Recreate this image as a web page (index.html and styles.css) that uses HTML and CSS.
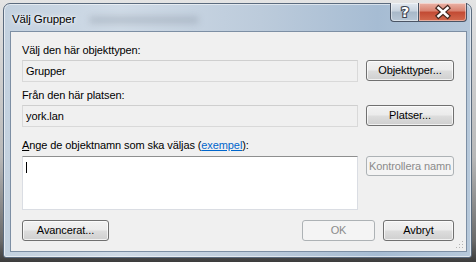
FILE: index.html
```html
<!DOCTYPE html>
<html lang="sv">
<head>
<meta charset="utf-8">
<title>Välj Grupper</title>
<link rel="stylesheet" href="styles.css">
</head>
<body>
<div class="window">
  <div class="titlebar">
    <span class="title">Välj Grupper</span>
    <span class="ghost"></span>
    <div class="controls">
      <div class="cbtn help">
        <svg width="28" height="18" viewBox="0 0 28 18"><text x="14" y="14" text-anchor="middle" class="qmark">?</text></svg>
      </div>
      <div class="cbtn close">
        <svg width="48" height="18" viewBox="0 0 48 18"><path d="M19.5 5 L28.5 13 M28.5 5 L19.5 13" class="xo"/><path d="M19.5 5 L28.5 13 M28.5 5 L19.5 13" class="xi"/></svg>
      </div>
    </div>
  </div>
  <div class="client">
    <div class="label l1">Välj den här objekttypen:</div>
    <div class="row r1">
      <div class="field">Grupper</div>
      <div class="btn">Objekttyper...</div>
    </div>
    <div class="label l2">Från den här platsen:</div>
    <div class="row r2">
      <div class="field">york.lan</div>
      <div class="btn">Platser...</div>
    </div>
    <div class="label l3"><u>A</u>nge de objektnamn som ska väljas (<a class="link" href="#">exempel</a>):</div>
    <div class="row r3">
      <div class="area"><span class="caret"></span></div>
      <div class="btn small disabled">Kontrollera namn</div>
    </div>
    <div class="bottom">
      <div class="btn adv">Avancerat...</div>
      <div class="spacer"></div>
      <div class="btn ok disabled">OK</div>
      <div class="btn cancel">Avbryt</div>
    </div>
    <svg class="grip" width="8" height="8" viewBox="0 0 8 8">
      <rect x="6" y="0" width="1" height="1"/><rect x="3" y="3" width="1" height="1"/><rect x="6" y="3" width="1" height="1"/>
      <rect x="0" y="6" width="1" height="1"/><rect x="3" y="6" width="1" height="1"/><rect x="6" y="6" width="1" height="1"/>
    </svg>
  </div>
</div>
</body>
</html>
```
FILE: styles.css
```css
html, body {
  margin: 0;
  padding: 0;
}
body {
  width: 476px;
  height: 262px;
  overflow: hidden;
  background: linear-gradient(#e4e4e4 0%, #b8b8b8 60%, #6a6a6a 92%, #3c3c3c 100%);
  font-family: "Liberation Sans", Arial, sans-serif;
  font-size: 11px;
  letter-spacing: -0.1px;
  color: #000;
}
.window {
  margin: 3px 4px 0 3px;
  width: 467px;
  height: 253px;
  border: 1px solid #5b6b7e;
  border-radius: 7px 7px 3px 3px;
  background: linear-gradient(90deg, #c3d1df 0%, #cfdae6 25%, #bccbdb 55%, #a6bcd3 80%, #b6c8da 100%);
  box-shadow: inset 0 0 0 1px rgba(255,255,255,0.55);
  display: flex;
  flex-direction: column;
}
.titlebar {
  height: 27px;
  display: flex;
  align-items: flex-start;
  flex: none;
}
.title {
  margin: 9px 0 0 8px;
  line-height: 13px;
  font-size: 11.5px;
  text-shadow: 0 0 6px #fff, 0 0 3px #fff;
}
.ghost {
  width: 110px;
  height: 8px;
  margin: 12px 0 0 14px;
  background: rgba(90, 100, 115, 0.2);
  filter: blur(3px);
  border-radius: 4px;
}
.controls {
  margin-left: auto;
  margin-right: 4px;
  margin-top: -1px;
  display: flex;
}
.cbtn {
  height: 18px;
  border: 1px solid #4a5464;
  border-top: none;
  box-shadow: inset 0 0 0 1px rgba(255,255,255,0.45);
}
.cbtn svg { display: block; }
.help {
  width: 27px;
  border-right: none;
  border-radius: 0 0 0 4px;
  background: linear-gradient(#e3e9f0 0%, #c6d2de 45%, #a8b8c9 50%, #b8c7d6 100%);
}
.close {
  width: 47px;
  border-radius: 0 0 4px 0;
  background: linear-gradient(#eab3a6 0%, #d9826f 45%, #c24a33 50%, #d36a4e 100%);
}
.qmark {
  font-family: "DejaVu Sans", sans-serif;
  font-weight: bold;
  font-size: 14px;
  fill: #fff;
  stroke: #3c4552;
  stroke-width: 2.2px;
  paint-order: stroke;
}
.xo { stroke: #43271f; stroke-width: 5; stroke-linecap: square; fill: none; }
.xi { stroke: #fff; stroke-width: 2.6; stroke-linecap: square; fill: none; }

.client {
  position: relative;
  margin: 0 4px 5px 6px;
  flex: 1;
  background: #f0f0f0;
  border: 1px solid #7d8fa4;
  padding: 0 12px 0 11px;
  display: flex;
  flex-direction: column;
}
.label {
  line-height: 14px;
  height: 14px;
  white-space: nowrap;
}
.l1 { margin-top: 11px; }
.l2 { margin-top: 6px; }
.l3 { margin-top: 11px; }
.row {
  display: flex;
  gap: 8px;
  align-items: flex-start;
}
.r1 { margin-top: 3px; }
.r2 { margin-top: 3px; }
.r3 { margin-top: 4px; }
.field {
  flex: 1;
  height: 20px;
  line-height: 20px;
  padding-left: 3px;
  background: #f0f0f0;
  border: 1px solid #d9d9d9;
  border-top-color: #cfcfcf;
}
.btn {
  width: 86px;
  height: 19px;
  line-height: 19px;
  text-align: center;
  border: 1px solid #707070;
  border-radius: 3px;
  background: linear-gradient(#f2f2f2 0%, #ebebeb 48%, #dddddd 52%, #cfcfcf 100%);
  box-shadow: inset 0 0 0 1px rgba(255,255,255,0.7);
  white-space: nowrap;
  flex: none;
}
.disabled {
  color: #8b8b8b;
  border-color: #adb2b5;
  background: #f4f4f4;
  box-shadow: none;
}
.small { height: 18px; line-height: 18px; }
.area {
  flex: 1;
  height: 52px;
  background: #fff;
  border: 1px solid #dadde3;
  border-top-color: #8e8f8f;
  position: relative;
}
.caret {
  position: absolute;
  left: 3px;
  top: 5px;
  width: 1px;
  height: 11px;
  background: #000;
}
.link {
  color: #0066cc;
  text-decoration: underline;
}
.bottom {
  display: flex;
  margin-top: 10px;
  gap: 8px;
}
.spacer { flex: 1; }
.adv { width: 85px; }
.ok { width: 71px; }
.cancel { width: 69px; }
.grip {
  position: absolute;
  right: 2px;
  bottom: 2px;
  fill: #b3b3b3;
}
```
